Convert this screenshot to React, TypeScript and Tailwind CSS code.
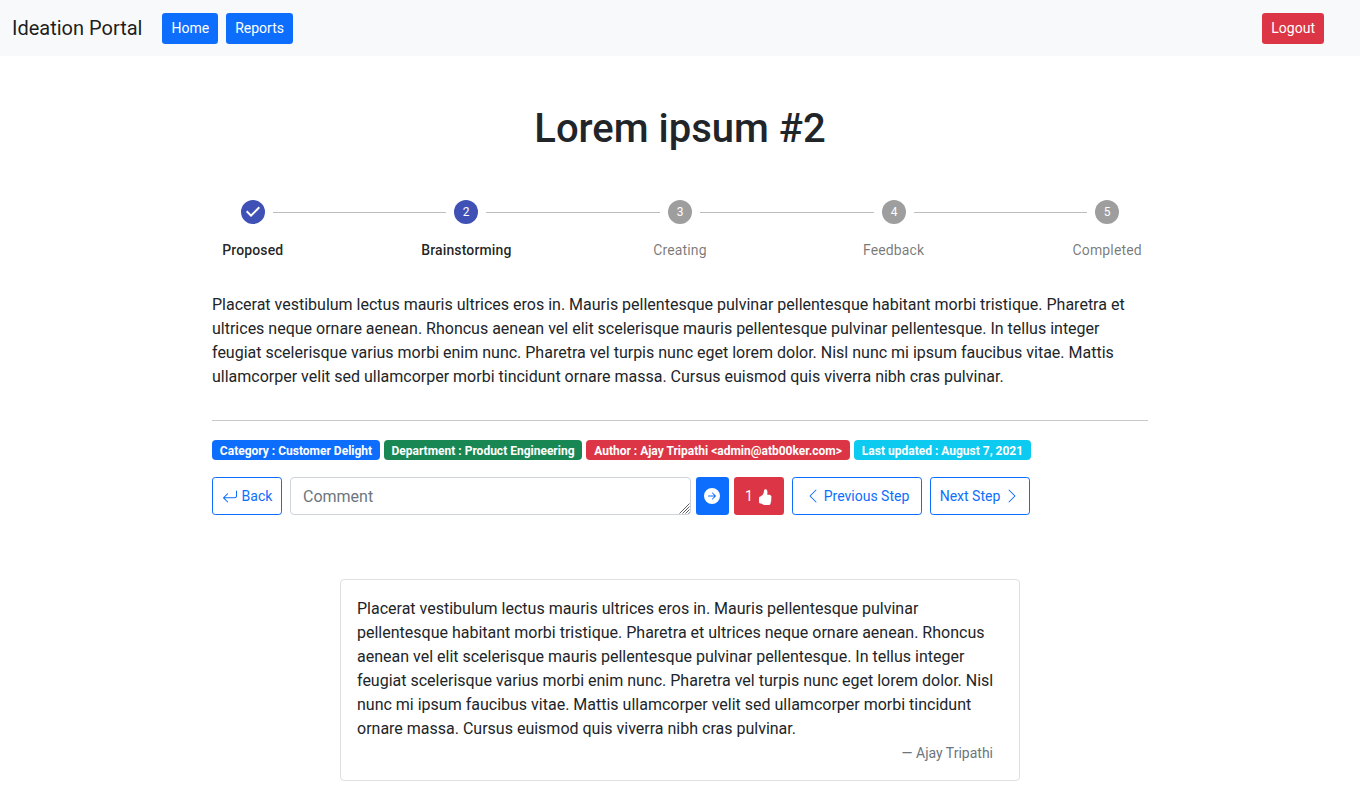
import { BsArrowReturnLeft, BsFillArrowRightCircleFill, BsFillHandThumbsUpFill, BsChevronLeft, BsChevronRight } from "react-icons/bs";

const steps = ["Proposed", "Brainstorming", "Creating", "Feedback", "Completed"];

const badges = [
  { text: "Category : Customer Delight", cls: "bg-[#0d6efd] w-[168px]" },
  { text: "Department : Product Engineering", cls: "bg-[#198754] w-[198px]" },
  { text: "Author : Ajay Tripathi <admin@atb00ker.com>", cls: "bg-[#dc3545] w-[264px]" },
  { text: "Last updated : August 7, 2021", cls: "bg-[#0dcaf0] w-[177px]" },
];

const smallButton = "h-[31px] rounded-[3.2px] px-[9px] text-[14px] leading-[21px] text-white";
const outlineButton = "flex h-[38px] items-center justify-center whitespace-nowrap rounded-[3.2px] border border-[#0d6efd] text-[14px] leading-[21px] text-[#0d6efd]";

function Step({ label, index }: { label: string; index: number }) {
  const active = index < 2;
  return (
    <div className="relative flex flex-1 flex-col items-center px-2">
      {index > 0 && (
        <div className="absolute left-[calc(-50%+20px)] right-[calc(50%+20px)] top-3 border-t border-[#bdbdbd]" />
      )}
      <svg viewBox="0 0 24 24" className={`h-6 w-6 ${active ? "fill-[#3f51b5]" : "fill-[#9e9e9e]"}`}>
        {index === 0 ? (
          <path d="M12 0a12 12 0 1 0 0 24a12 12 0 0 0 0-24zm-2 17l-5-5 1.4-1.4 3.6 3.6 7.6-7.6L19 8l-9 9z" />
        ) : (
          <>
            <circle cx="12" cy="12" r="12" />
            <text x="12" y="16" textAnchor="middle" className="fill-white text-[12px]">{index + 1}</text>
          </>
        )}
      </svg>
      <div className={`mt-4 text-[14px] leading-[20px] tracking-[0.13px] ${active ? "font-medium text-black/87" : "text-black/54"}`}>{label}</div>
    </div>
  );
}

export default function App() {
  return (
    <div className="h-[805px] overflow-hidden bg-white font-[Roboto,sans-serif] text-[16px] leading-6 text-[#212529]">
      <nav className="flex h-14 items-center bg-[#f8f9fa] pl-3 pr-9">
        <span className="mr-5 text-[20px] leading-[30px] text-black/90">Ideation Portal</span>
        <button className={`${smallButton} mr-2 bg-[#0d6efd]`}>Home</button>
        <button className={`${smallButton} bg-[#0d6efd]`}>Reports</button>
        <button className={`${smallButton} ml-auto bg-[#dc3545]`}>Logout</button>
      </nav>
      <main className="mx-auto w-[936px] pt-[49px]">
        <h1 className="text-center text-[40px] font-medium leading-[48px]">Lorem ipsum #2</h1>
        <div className="-mx-[66px] mt-[47px] flex">
          {steps.map((s, i) => <Step key={s} label={s} index={i} />)}
        </div>
        <p className="mt-[33px]">Placerat vestibulum lectus mauris ultrices eros in. Mauris pellentesque pulvinar pellentesque habitant morbi tristique. Pharetra et ultrices neque ornare aenean. Rhoncus aenean vel elit scelerisque mauris pellentesque pulvinar pellentesque. In tellus integer feugiat scelerisque varius morbi enim nunc. Pharetra vel turpis nunc eget lorem dolor. Nisl nunc mi ipsum faucibus vitae. Mattis ullamcorper velit sed ullamcorper morbi tincidunt ornare massa. Cursus euismod quis viverra nibh cras pulvinar.</p>
        <hr className="mt-[31px] border-[#c8c9ca]" />
        <div className="mt-[19px] flex gap-1">
          {badges.map((b) => (
            <span key={b.text} className={`h-5 whitespace-nowrap rounded text-center text-[12px] font-bold leading-[22px] text-white ${b.cls}`}>{b.text}</span>
          ))}
        </div>
        <div className="mt-[17px] flex h-[38px]">
          <button className={`${outlineButton} w-[70px] gap-1`}><BsArrowReturnLeft size={16} className="translate-y-px" />Back</button>
          <div className="relative ml-2 h-[38px] w-[401px]">
            <textarea placeholder="Comment" className="block h-full w-full resize-none overflow-hidden rounded border border-[#ced4da] px-3 pb-[5px] pt-[7px] text-[16px] leading-6 placeholder:text-[#6c757d]" />
            <svg viewBox="0 0 11 11" className="pointer-events-none absolute bottom-[1px] right-[1px] h-[11px] w-[11px] stroke-[#606060]" fill="none">
              <path d="M0.5 10.5l10-10M3.5 10.5l7-7M6.5 10.5l4-4M9.5 10.5l1-1" />
            </svg>
          </div>
          <button className="ml-[5px] flex w-[33px] items-center justify-start rounded-[3.2px] bg-[#0d6efd] pl-2 text-white"><BsFillArrowRightCircleFill size={16} /></button>
          <button className="ml-[5px] flex w-[50px] items-center justify-center gap-1 rounded-[3.2px] bg-[#dc3545] text-[14px] text-white">1 <BsFillHandThumbsUpFill size={16} className="translate-y-px" /></button>
          <button className={`${outlineButton} ml-2 w-[130px] gap-[3px]`}><BsChevronLeft size={16} />Previous Step</button>
          <button className={`${outlineButton} ml-2 w-[100px] gap-1`}>Next Step<BsChevronRight size={16} /></button>
        </div>
        <section className="mx-auto mt-16 h-[202px] w-[680px] rounded border border-[#dfdfdf] px-4 pt-[17px]">
          <p>Placerat vestibulum lectus mauris ultrices eros in. Mauris pellentesque pulvinar pellentesque habitant morbi tristique. Pharetra et ultrices neque ornare aenean. Rhoncus aenean vel elit scelerisque mauris pellentesque pulvinar pellentesque. In tellus integer feugiat scelerisque varius morbi enim nunc. Pharetra vel turpis nunc eget lorem dolor. Nisl nunc mi ipsum faucibus vitae. Mattis ullamcorper velit sed ullamcorper morbi tincidunt ornare massa. Cursus euismod quis viverra nibh cras pulvinar.</p>
          <footer className="pr-[10px] text-right text-[14px] text-[#6c757d]">— Ajay Tripathi</footer>
        </section>
      </main>
    </div>
  );
}
